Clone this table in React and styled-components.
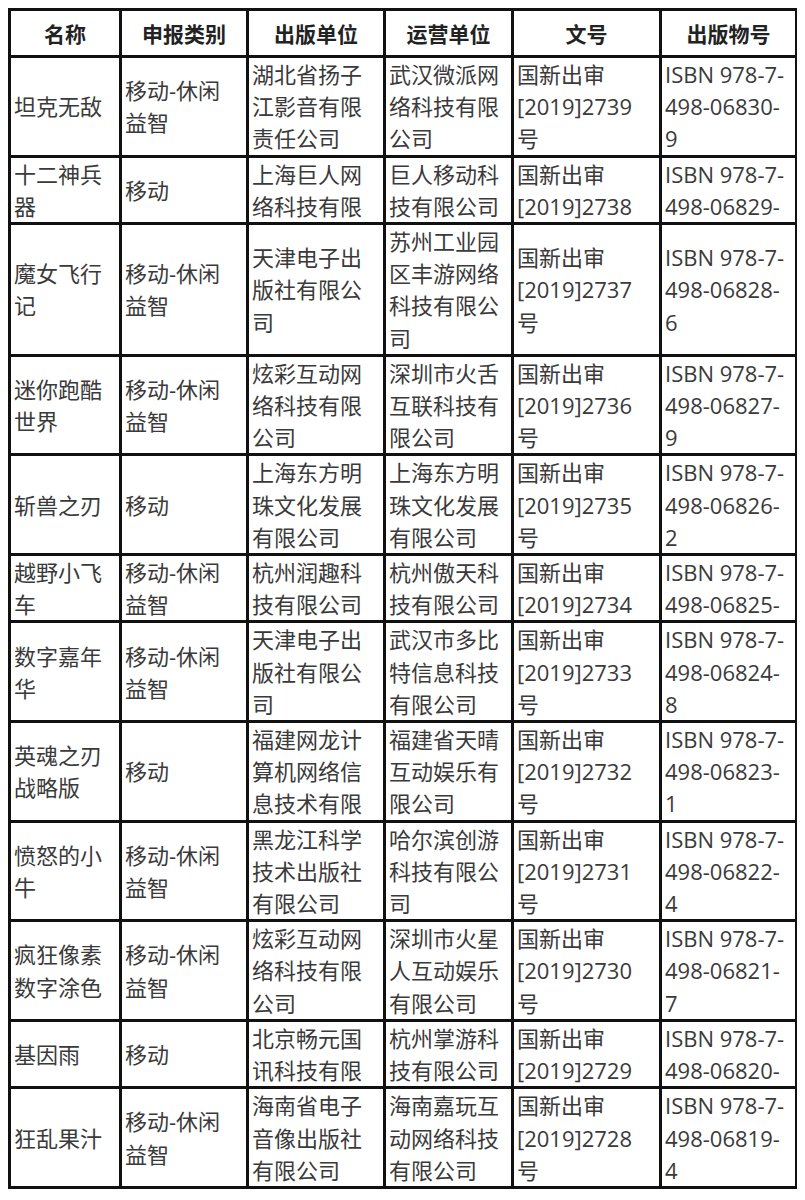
import React from "react";
import styled, { createGlobalStyle } from "styled-components";

const GlobalStyle = createGlobalStyle`
  body {
    margin: 8px;
    background: #fff;
    font-family: "Open Sans", "Noto Sans CJK SC", sans-serif;
  }
`;

const headers = ["名称", "申报类别", "出版单位", "运营单位", "文号", "出版物号"];

// each cell holds the lines shown in the picture
const rows = [
  [["坦克无敌"], ["移动-休闲", "益智"], ["湖北省扬子", "江影音有限", "责任公司"], ["武汉微派网", "络科技有限", "公司"], ["国新出审", "[2019]2739", "号"], ["ISBN 978-7-", "498-06830-", "9"]],
  [["十二神兵", "器"], ["移动"], ["上海巨人网", "络科技有限"], ["巨人移动科", "技有限公司"], ["国新出审", "[2019]2738"], ["ISBN 978-7-", "498-06829-"]],
  [["魔女飞行", "记"], ["移动-休闲", "益智"], ["天津电子出", "版社有限公", "司"], ["苏州工业园", "区丰游网络", "科技有限公", "司"], ["国新出审", "[2019]2737", "号"], ["ISBN 978-7-", "498-06828-", "6"]],
  [["迷你跑酷", "世界"], ["移动-休闲", "益智"], ["炫彩互动网", "络科技有限", "公司"], ["深圳市火舌", "互联科技有", "限公司"], ["国新出审", "[2019]2736", "号"], ["ISBN 978-7-", "498-06827-", "9"]],
  [["斩兽之刃"], ["移动"], ["上海东方明", "珠文化发展", "有限公司"], ["上海东方明", "珠文化发展", "有限公司"], ["国新出审", "[2019]2735", "号"], ["ISBN 978-7-", "498-06826-", "2"]],
  [["越野小飞", "车"], ["移动-休闲", "益智"], ["杭州润趣科", "技有限公司"], ["杭州傲天科", "技有限公司"], ["国新出审", "[2019]2734"], ["ISBN 978-7-", "498-06825-"]],
  [["数字嘉年", "华"], ["移动-休闲", "益智"], ["天津电子出", "版社有限公", "司"], ["武汉市多比", "特信息科技", "有限公司"], ["国新出审", "[2019]2733", "号"], ["ISBN 978-7-", "498-06824-", "8"]],
  [["英魂之刃", "战略版"], ["移动"], ["福建网龙计", "算机网络信", "息技术有限"], ["福建省天晴", "互动娱乐有", "限公司"], ["国新出审", "[2019]2732", "号"], ["ISBN 978-7-", "498-06823-", "1"]],
  [["愤怒的小", "牛"], ["移动-休闲", "益智"], ["黑龙江科学", "技术出版社", "有限公司"], ["哈尔滨创游", "科技有限公", "司"], ["国新出审", "[2019]2731", "号"], ["ISBN 978-7-", "498-06822-", "4"]],
  [["疯狂像素", "数字涂色"], ["移动-休闲", "益智"], ["炫彩互动网", "络科技有限", "公司"], ["深圳市火星", "人互动娱乐", "有限公司"], ["国新出审", "[2019]2730", "号"], ["ISBN 978-7-", "498-06821-", "7"]],
  [["基因雨"], ["移动"], ["北京畅元国", "讯科技有限"], ["杭州掌游科", "技有限公司"], ["国新出审", "[2019]2729"], ["ISBN 978-7-", "498-06820-"]],
  [["狂乱果汁"], ["移动-休闲", "益智"], ["海南省电子", "音像出版社", "有限公司"], ["海南嘉玩互", "动网络科技", "有限公司"], ["国新出审", "[2019]2728", "号"], ["ISBN 978-7-", "498-06819-", "4"]],
];

const Grid = styled.div`
  display: grid;
  grid-template-columns: 108px 124px 134px 125px 145px 133px;
  gap: 3px;
  padding: 3px;
  width: max-content;
  background: #111;
`;

const HeadCell = styled.div`
  display: flex;
  align-items: center;
  justify-content: center;
  height: 44px;
  background: #fff;
  color: #222;
  font-size: 21px;
  font-weight: 700;
`;

const Cell = styled.div`
  display: flex;
  flex-direction: column;
  justify-content: center;
  padding: 0 3px;
  background: #fff;
  color: #3a3a3a;
  font-size: 22px;
  line-height: 32.2px;
  white-space: nowrap;
  overflow: hidden;
`;

const Line = styled.span`
  display: block;
`;

export default function App() {
  return (
    <>
      <GlobalStyle />
      <Grid>
        {headers.map((h) => (
          <HeadCell key={h}>{h}</HeadCell>
        ))}
        {rows.map((row, r) =>
          row.map((lines, c) => (
            <Cell key={`${r}-${c}`}>
              {lines.map((line, i) => (
                <Line key={i}>{line}</Line>
              ))}
            </Cell>
          ))
        )}
      </Grid>
    </>
  );
}
